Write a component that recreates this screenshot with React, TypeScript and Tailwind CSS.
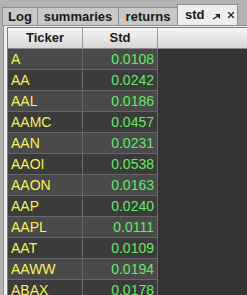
import { X } from 'lucide-react'

const ROWS: [string, string][] = [
  ['A', '0.0108'],
  ['AA', '0.0242'],
  ['AAL', '0.0186'],
  ['AAMC', '0.0457'],
  ['AAN', '0.0231'],
  ['AAOI', '0.0538'],
  ['AAON', '0.0163'],
  ['AAP', '0.0240'],
  ['AAPL', '0.0111'],
  ['AAT', '0.0109'],
  ['AAWW', '0.0194'],
  ['ABAX', '0.0178'],
]

const TABS = [
  { label: 'Log', w: 'w-[36px]' },
  { label: 'summaries', w: 'w-[82px]' },
  { label: 'returns', w: 'w-[60px]' },
]

function UndockIcon() {
  return (
    <svg width="9" height="9" viewBox="0 0 9 9" className="text-[#222]">
      <path d="M3 3 L8 3 L8 8 Z" fill="currentColor" />
      <path d="M6 5 L1 8" stroke="currentColor" strokeWidth="1.4" />
    </svg>
  )
}

export default function App() {
  return (
    <div
      className="w-[247px] h-[295px] overflow-hidden bg-[#b3b3b3] flex flex-col"
      style={{ fontFamily: '"Liberation Sans", Arial, sans-serif' }}
    >
      {/* tab strip */}
      <div className="h-[25px] flex items-end pl-[2px] shrink-0">
        {TABS.map((t) => (
          <div
            key={t.label}
            className={`${t.w} h-[18px] -ml-px first:ml-0 bg-[#c8c8c8] border border-b-0 border-[#8e8e8e] flex items-center justify-center text-[13px] font-bold text-[#1a1a1a]`}
          >
            {t.label}
          </div>
        ))}
        <div className="w-[61px] h-[21px] -ml-px bg-[#eeeeee] border border-b-0 border-[#8e8e8e] flex items-center pl-[7px] text-[13px] font-bold text-[#1a1a1a]">
          <span>std</span>
          <span className="ml-[7px]">
            <UndockIcon />
          </span>
          <X size={10} strokeWidth={3} className="ml-[5px] text-[#222]" />
        </div>
      </div>

      {/* content panel */}
      <div className="flex-1 ml-[3px] bg-[#eeeeee] border-l border-t border-[#8e8e8e] pt-[1px] pl-[3px] flex flex-col min-h-0">
        <div className="flex-1 flex flex-col border-l border-t border-[#7a7a7a] min-h-0">
          {/* header */}
          <div className="h-[21px] shrink-0 flex bg-gradient-to-b from-[#f6f6f6] to-[#d6d6d6] border-b border-[#8a8a8a]">
            <div className="w-[75px] border-r border-[#9a9a9a] flex items-center justify-center text-[13px] font-bold text-[#1a1a1a]">
              Ticker
            </div>
            <div className="w-[75px] border-r border-[#9a9a9a] flex items-center justify-center text-[13px] font-bold text-[#1a1a1a]">
              Std
            </div>
            <div className="flex-1" />
          </div>

          {/* body */}
          <div className="flex-1 flex bg-[#333333] min-h-0">
            <div className="w-[150px] flex flex-col">
              {ROWS.map(([tk, v], i) => (
                <div
                  key={tk}
                  className={`h-[21px] shrink-0 flex border-b border-[#686868] text-[14px] ${
                    i % 2 === 0 ? 'bg-[#4a4a4a]' : 'bg-[#3b3b3b]'
                  }`}
                >
                  <div className="w-[75px] border-r border-[#686868] flex items-center pl-[3px] text-[#f4f25a]">
                    {tk}
                  </div>
                  <div className="w-[75px] border-r border-[#686868] flex items-center justify-end pr-[3px] text-[#62ea62]">
                    {v}
                  </div>
                </div>
              ))}
            </div>
            <div className="flex-1" />
          </div>
        </div>
      </div>
    </div>
  )
}
